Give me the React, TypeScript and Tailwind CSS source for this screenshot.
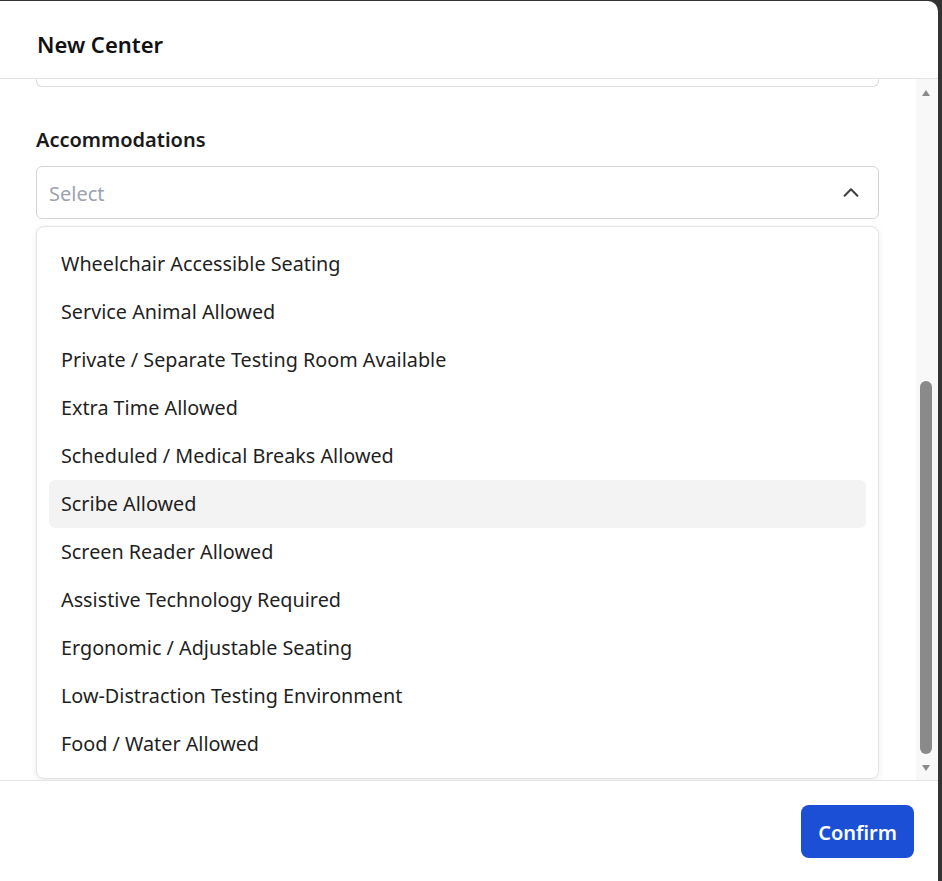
import React from "react";

const items = [
  "Wheelchair Accessible Seating",
  "Service Animal Allowed",
  "Private / Separate Testing Room Available",
  "Extra Time Allowed",
  "Scheduled / Medical Breaks Allowed",
  "Scribe Allowed",
  "Screen Reader Allowed",
  "Assistive Technology Required",
  "Ergonomic / Adjustable Seating",
  "Low-Distraction Testing Environment",
  "Food / Water Allowed",
];

export default function App() {
  return (
    <div
      className="w-[942px] h-[881px] bg-[#333333] pt-px pr-[4px] overflow-hidden"
      style={{ fontFamily: '"Noto Sans", "Open Sans", sans-serif' }}
    >
      <div className="bg-white h-full rounded-tr-[10px] flex flex-col">
        <div className="h-[78px] flex items-center px-[37px] border-b border-[#e5e5e5] shrink-0">
          <h1 className="text-[22px] font-semibold text-[#111] mt-[10px]">New Center</h1>
        </div>
        <div className="flex-1 flex min-h-0">
          <div className="flex-1 relative overflow-hidden pl-[36px] pr-[37px]">
            <div className="h-[8px] border border-t-0 border-[#dcdcdc] rounded-b-[6px]" />
            <div className="mt-[40px] text-[20px] font-semibold text-[#1a1a1a] leading-[26px]">
              Accommodations
            </div>
            <div className="relative mt-[13px]">
              <div className="h-[53px] border border-[#d4d4d8] rounded-[6px] flex items-center justify-between pl-[12px] pr-[16px]">
                <span className="text-[20px] text-[#9ca3af] mt-[2px]">Select</span>
                <svg width="22" height="22" viewBox="0 0 24 24" fill="none" stroke="#3f3f46" strokeWidth="2.2" strokeLinecap="round" strokeLinejoin="round">
                  <path d="M5 15l7-7 7 7" />
                </svg>
              </div>
              <div className="absolute left-0 right-0 top-[60px] h-[553px] bg-white border border-[#e4e4e7] rounded-[8px] shadow-[0_2px_6px_rgba(0,0,0,0.08)] px-[12px] pt-[13px] z-10">
                {items.map((it) => (
                  <div
                    key={it}
                    className={`h-[48px] flex items-center px-[12px] rounded-[6px] text-[19.8px] text-[#1f1f1f] ${
                      it === "Scribe Allowed" ? "bg-[#f3f3f3]" : ""
                    }`}
                  >
                    {it}
                  </div>
                ))}
              </div>
            </div>
          </div>
          <div className="w-[22px] bg-[#f8f8f8] flex flex-col items-center shrink-0 pr-[2px]">
            <svg width="10" height="8" viewBox="0 0 10 8" className="mt-[10px]">
              <path d="M5 1L9 7H1Z" fill="#8a8a8a" />
            </svg>
            <div className="flex-1" />
            <div className="w-[12px] h-[373px] bg-[#8a8a8a] rounded-full" />
            <svg width="10" height="8" viewBox="0 0 10 8" className="mt-[10px] mb-[8px]">
              <path d="M1 1H9L5 7Z" fill="#8a8a8a" />
            </svg>
          </div>
        </div>
        <div className="h-[101px] border-t border-[#e5e5e5] flex items-start justify-end pt-[24px] pr-[24px] shrink-0">
          <button className="h-[53px] px-[17px] bg-[#1a4fd6] text-white text-[20px] font-semibold rounded-[8px]">
            <span className="relative top-[1px]">Confirm</span>
          </button>
        </div>
      </div>
    </div>
  );
}
